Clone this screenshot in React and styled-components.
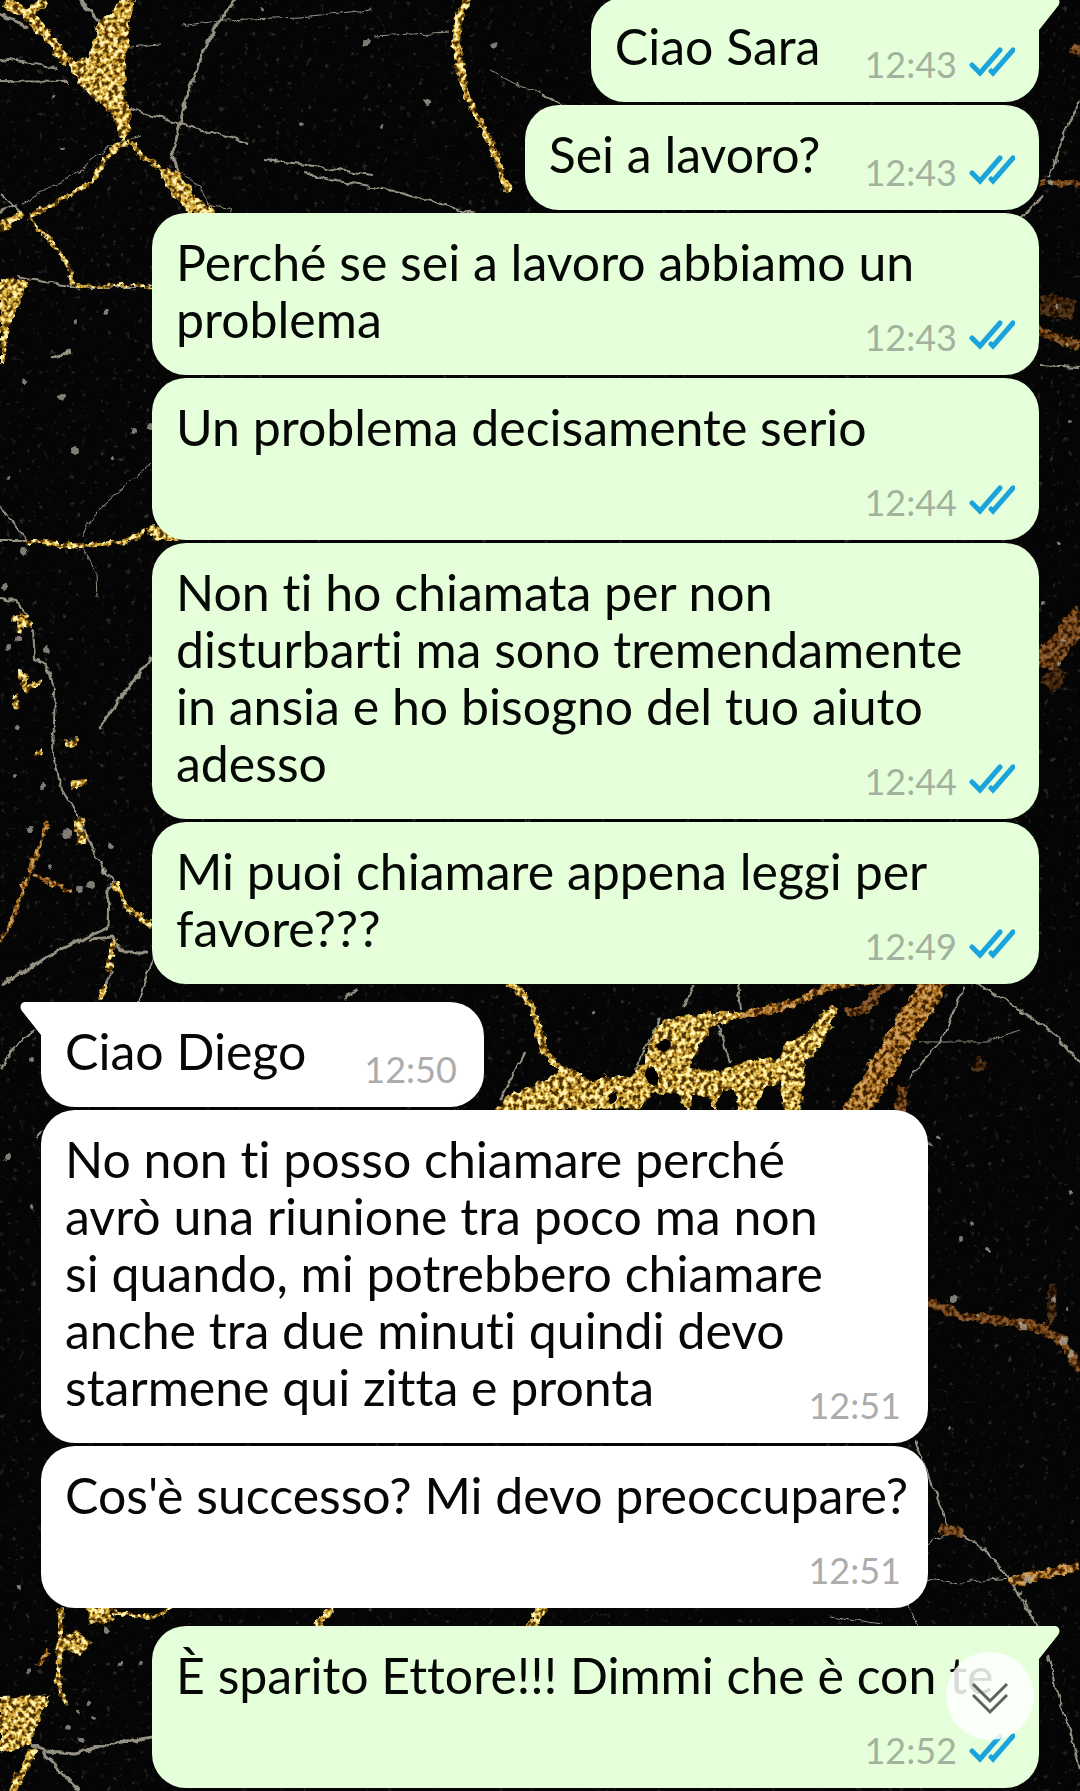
import React from 'react';
import styled, { createGlobalStyle } from 'styled-components';

const GlobalStyle = createGlobalStyle`
  body {
    margin: 0;
    background: #050505;
  }
`;

const Screen = styled.main`
  position: relative;
  min-height: 100vh;
  overflow: hidden;
  font-family: Lato, 'Noto Sans', sans-serif;
  font-variant-ligatures: none;
`;

const Wallpaper = styled.svg`
  position: absolute;
  top: 0;
  left: 0;
  width: 100%;
  height: 100%;
`;

const Thread = styled.div`
  position: relative;
  display: flex;
  flex-direction: column;
  gap: 18px;
  margin-top: -3px;
  padding: 0 41px 3px;
`;

const Group = styled.section`
  display: flex;
  flex-direction: column;
  align-items: ${props => props.$mine ? 'flex-end' : 'flex-start'};
  gap: 3px;
`;

const Bubble = styled.article`
  position: relative;
  display: flow-root;
  box-sizing: border-box;
  width: ${props => props.$wide ? '100%' : 'auto'};
  max-width: calc(100% - 111px);
  padding: 21px 10px 27px 24px;
  border-radius: 34px;
  ${props => props.$tail && (props.$mine ? 'border-top-right-radius: 0;' : 'border-top-left-radius: 0;')}
  background: ${props => props.$mine ? '#e4ffda' : '#ffffff'};
  color: #050805;
  font-size: 50px;
  line-height: 57px;
`;

const TailShape = styled.svg`
  position: absolute;
  top: 0;
  ${props => props.$mine ? 'right: -21px;' : 'left: -21px; transform: scaleX(-1);'}
  width: 22px;
  height: 34px;
  fill: ${props => props.$mine ? '#e4ffda' : '#ffffff'};
`;

const Meta = styled.span`
  float: right;
  display: flex;
  align-items: flex-end;
  gap: 12px;
  height: 57px;
  margin: 7px ${props => props.$mine ? '14px' : '17px'} -7px ${props => props.$mine ? '44px' : '58px'};
`;

const Time = styled.time`
  color: ${props => props.$mine ? '#a3b29f' : '#acacac'};
  font-size: 36px;
  line-height: 36px;
`;

const TickIcon = styled.svg`
  width: 46px;
  height: 30px;
  margin-bottom: 5px;
  fill: none;
  stroke: #1ba4dc;
  stroke-width: 5;
  stroke-linecap: round;
`;

const ScrollButton = styled.button`
  position: fixed;
  right: 46px;
  bottom: 51px;
  display: flex;
  align-items: center;
  justify-content: center;
  width: 88px;
  height: 88px;
  padding: 4px 0 0;
  border: 0;
  border-radius: 50%;
  background: rgba(255, 255, 255, 0.85);
`;

// tints laid over the glitter
const GOLD = '#fffbe6';
const AMBER = '#cda680';
const BRONZE = '#8a6248';
const UMBER = '#553c2c';
const SILVER = '#c4bfac';

const goldShapes = [
  'M121 0H136L130 20L126 70L125 100L131 115L126 142L120 135L112 115L90 95L76 80L68 60L88 57L92 45L97 25Z',
  'M157 166L178 172L195 195L218 213H190L165 186Z',
  'M0 279L28 281L12 320L3 362L0 366Z',
  'M145 527L160 526L180 541H155Z',
  'M493 1112L510 1095L545 1080L565 1068L600 1076L630 1078L645 1060L655 1030L668 1018L690 1015L740 1010L745 1018L715 1026L700 1042L689 1068L720 1070L760 1058L780 1058L785 1043L805 1035L830 1004L838 1010L825 1040L805 1062L800 1112H785L780 1084L765 1088L755 1112H740L735 1090L722 1090L715 1112L708 1095L694 1095L688 1110L676 1092L652 1094L640 1108Z',
  'M0 1698L50 1695L37 1722L30 1745L0 1755Z',
  'M86 1606H108L114 1620L90 1624Z',
  'M60 1640L75 1632L92 1644L80 1655L62 1650Z',
];

// [path, stroke width, colour]
const veins = [
  ['M5 3L28 14L48 38L68 62', 10, GOLD],
  ['M26 14L45 2', 8, GOLD],
  ['M126 140L108 155L92 182L60 200L30 216', 5, GOLD],
  ['M22 212L0 229', 8, GOLD],
  ['M129 140L140 155L160 168', 4, GOLD],
  ['M467 0L456 25L455 42L461 75L470 105L485 130L497 160L509 192', 7, GOLD],
  ['M460 12L456 40L463 80', 9, GOLD],
  ['M75 287L103 285L152 286', 3, GOLD],
  ['M30 218L50 240L65 260L75 287', 3, GOLD],
  ['M27 541L75 546L120 543L145 532', 5, GOLD],
  ['M77 818L83 845', 9, GOLD],
  ['M114 882L127 908L152 926', 5, GOLD],
  ['M48 822L30 870L10 925L0 942', 4, AMBER],
  ['M33 874L60 886L72 892', 4, AMBER],
  ['M12 617L32 625M20 632L24 614', 7, GOLD],
  ['M22 670L26 690L40 680M15 695L18 710', 5, GOLD],
  ['M65 743H79M36 752H42M72 784L87 782', 7, GOLD],
  ['M100 1000L105 985M108 972L114 940', 6, GOLD],
  ['M498 970L520 992L534 1008L543 1050L565 1072', 7, GOLD],
  ['M740 1015L790 1005L830 986L890 978', 8, AMBER],
  ['M846 1012L866 1010L874 996L894 978', 9, BRONZE],
  ['M942 970L898 1042L852 1118', 26, AMBER],
  ['M900 1112L903 1085', 10, BRONZE],
  ['M922 1295L932 1303L960 1316L1000 1320L1040 1328L1062 1340L1080 1370', 9, BRONZE],
  ['M1051 1325L1053 1284', 8, UMBER],
  ['M940 1528L962 1532', 9, BRONZE],
  ['M1010 1582L1040 1575L1080 1566', 10, AMBER],
  ['M1010 320L1035 329L1080 347', 10, BRONZE],
  ['M1040 305L1074 310', 20, UMBER],
  ['M1008 660L1050 656L1084 615', 24, BRONZE],
  ['M1046 688L1062 668', 16, UMBER],
  ['M1040 183H1080', 6, BRONZE],
  ['M1072 48L1080 52', 9, BRONZE],
  ['M61 1608L60 1650L58 1680L65 1705', 5, GOLD],
  ['M48 1650L38 1666', 4, AMBER],
  ['M34 1750L12 1791', 8, GOLD],
  ['M113 1612L150 1618L172 1608', 4, GOLD],
  ['M335 1604L316 1628', 6, GOLD],
  ['M545 1602L530 1628', 9, GOLD],
  ['M975 1062L984 1068', 14, UMBER],
];

const threads = [
  ['M80 0L100 22M0 14L28 27', 3],
  ['M0 59L30 63L57 68M0 81L68 82', 2],
  ['M235 0L217 24L200 60L187 94L180 125L172 152L178 172', 3],
  ['M180 26L225 20L300 17L370 10', 1],
  ['M130 47L160 44M375 36L450 32', 1],
  ['M130 109L180 124L248 143', 2],
  ['M265 160L300 164L372 175M305 173L335 181L400 192L475 214', 2],
  ['M140 135L112 145L75 173L22 204', 1],
  ['M180 172L202 188L208 205L230 207L232 214', 1],
  ['M490 70L520 86L545 95L565 107', 1],
  ['M0 195L22 214M0 212L16 204', 2],
  ['M16 277L75 287H152', 2],
  ['M0 505L27 540M0 541H27', 2],
  ['M152 463L100 508L87 525L82 538M84 548L96 575L97 598', 1],
  ['M52 358L70 352M152 657L115 705L100 730', 3],
  ['M0 598L15 600L28 615M33 630L35 660L46 665L55 690L53 755L62 790L80 820L97 858L115 882', 2],
  ['M0 985L60 950L107 928L108 890L114 880M90 940L112 938L124 952H148', 3],
  ['M152 958L138 1002M112 970L100 1000', 2],
  ['M36 1030L22 1038L0 1068M36 1136L42 1130', 2],
  ['M695 984L683 1008M660 1020L634 1070M738 984L741 1010M718 1025L730 1062M525 1052L500 1100', 2],
  ['M964 986L944 1035L910 1078M975 982L1005 1000L1040 1024L1060 1040L1082 1066', 2],
  ['M920 1042H990L1018 1030', 1],
  ['M914 1440L928 1475L948 1525L985 1550L1010 1580L1035 1622', 2],
  ['M926 1579L960 1583L1010 1578M928 1543L945 1535M906 1600L917 1628M830 1616L882 1624', 1],
  ['M1025 1598L1037 1628M1048 1655L1056 1690L1070 1730L1080 1770', 2],
  ['M1080 100L1065 130L1050 178M1044 195L1020 218M1040 365L1080 367', 2],
  ['M30 1745L48 1752L75 1754L115 1743L152 1737M42 1752L80 1791', 3],
  ['M345 1000L358 988M542 95L560 104', 2],
];

// x, y, radius
const dots = [
  [366, 43, 3], [426, 103, 3], [382, 128, 2], [494, 45, 3], [302, 124, 2], [262, 10, 2],
  [53, 96, 2], [61, 148, 2], [25, 381, 3], [74, 451, 4], [75, 322, 2], [112, 459, 2],
  [134, 431, 3], [150, 426, 3], [8, 478, 2], [62, 396, 3], [106, 311, 3], [24, 551, 4],
  [4, 588, 3], [8, 647, 3], [19, 638, 3], [46, 650, 3], [18, 727, 3], [42, 786, 3],
  [29, 829, 4], [67, 834, 5], [80, 889, 4], [90, 884, 4], [110, 846, 3], [105, 870, 3],
  [50, 868, 2], [14, 775, 2], [8, 1156, 3], [31, 1206, 2], [32, 1060, 2], [594, 1012, 2],
  [953, 1299, 4], [1053, 1300, 3], [1068, 1309, 2], [938, 1136, 2], [973, 1224, 2],
  [988, 1250, 2], [960, 1239, 2], [1069, 1192, 2], [1022, 1326, 4], [978, 1316, 2],
  [1064, 1341, 4], [1071, 1354, 3], [1029, 1580, 4], [1020, 1593, 2], [950, 1428, 2],
  [107, 1630, 3], [28, 1671, 2], [19, 1588, 2], [140, 1662, 2], [120, 1664, 2],
  [88, 1704, 2], [78, 1711, 2], [68, 1728, 3], [80, 1740, 3], [94, 1718, 2],
  [1070, 422, 2], [1060, 542, 2], [1044, 603, 2], [1058, 307, 2], [1067, 345, 2],
  [1032, 659, 3], [1058, 664, 2], [1062, 640, 2], [1050, 184, 3], [930, 1145, 2],
];

const Marble = () => (
  <Wallpaper viewBox="0 0 1080 1791" preserveAspectRatio="xMidYMin slice" aria-hidden="true">
    <defs>
      <filter id="glitter" filterUnits="userSpaceOnUse" x="0" y="0" width="1080" height="1791" colorInterpolationFilters="sRGB">
        <feTurbulence type="fractalNoise" baseFrequency="0.12" numOctaves="3" seed="4" result="warp" />
        <feDisplacementMap in="SourceGraphic" in2="warp" scale="9" xChannelSelector="R" yChannelSelector="G" result="rough" />
        <feTurbulence type="fractalNoise" baseFrequency="0.22" numOctaves="2" seed="9" />
        <feColorMatrix values="3.6 0 0 0 -1.3  3.6 0 0 0 -1.3  3.6 0 0 0 -1.3  0 0 0 0 1" />
        <feComponentTransfer result="grain">
          <feFuncR type="table" tableValues="0.3 0.62 0.8 0.9 1" />
          <feFuncG type="table" tableValues="0.2 0.45 0.64 0.8 0.97" />
          <feFuncB type="table" tableValues="0.04 0.12 0.24 0.4 0.78" />
        </feComponentTransfer>
        <feComposite in="rough" in2="grain" operator="arithmetic" k1="1" k2="0" k3="0" k4="0" />
      </filter>
      <filter id="crack" filterUnits="userSpaceOnUse" x="0" y="0" width="1080" height="1791">
        <feTurbulence type="fractalNoise" baseFrequency="0.09" numOctaves="3" seed="7" />
        <feDisplacementMap in="SourceGraphic" scale="7" xChannelSelector="R" yChannelSelector="G" />
      </filter>
      <filter id="dust" filterUnits="userSpaceOnUse" x="0" y="0" width="1080" height="1791" colorInterpolationFilters="sRGB">
        <feTurbulence type="fractalNoise" baseFrequency="0.16" numOctaves="3" seed="12" />
        <feColorMatrix values="0 0 0 0 0.5  0 0 0 0 0.5  0 0 0 0 0.48  4 0 0 0 -2.65" />
      </filter>
    </defs>
    <rect width="1080" height="1791" fill="#050505" />
    <rect width="1080" height="1791" filter="url(#dust)" opacity="0.4" />
    <g fill="none" stroke={SILVER} strokeLinejoin="round" opacity="0.75" filter="url(#crack)">
      {threads.map(([d, width]) => <path key={d} d={d} strokeWidth={width} />)}
    </g>
    <g filter="url(#glitter)">
      {goldShapes.map(d => <path key={d} d={d} fill={GOLD} />)}
      {veins.map(([d, width, color]) => (
        <path key={d} d={d} fill="none" stroke={color} strokeWidth={width} strokeLinejoin="round" />
      ))}
    </g>
    <g fill="#050505" filter="url(#crack)">
      <ellipse cx="664" cy="1046" rx="8" ry="6" />
      <ellipse cx="652" cy="1077" rx="7" ry="9" />
      <ellipse cx="593" cy="1076" rx="12" ry="4" />
      <ellipse cx="612" cy="1098" rx="4" ry="6" />
    </g>
    <g fill="#b5b0a4" opacity="0.7" filter="url(#crack)">
      {dots.map(([x, y, r]) => <circle key={`${x}-${y}`} cx={x} cy={y} r={r} />)}
    </g>
  </Wallpaper>
);

const Tail = ({ mine }) => (
  <TailShape $mine={mine} viewBox="0 0 22 34" aria-hidden="true">
    <path d="M0 0H17C21 0 23 5 20 9L1 33V34H0Z" />
  </TailShape>
);

const Ticks = () => (
  <TickIcon viewBox="0 0 46 30" role="img" aria-label="Letto">
    <path d="M3 18L11 26L31 3M22 24L24 26L44 3" />
  </TickIcon>
);

const Message = ({ mine, tail, lines, time }) => (
  <Bubble $mine={mine} $tail={tail} $wide={lines.length > 1}>
    {tail && <Tail mine={mine} />}
    {lines.map((line, i) => (
      <React.Fragment key={i}>
        {i > 0 && <br />}
        <span>{line}</span>
      </React.Fragment>
    ))}
    <Meta $mine={mine}>
      <Time $mine={mine}>{time}</Time>
      {mine && <Ticks />}
    </Meta>
  </Bubble>
);

const groups = [
  {
    mine: true,
    messages: [
      { lines: ['Ciao Sara'], time: '12:43' },
      { lines: ['Sei a lavoro?'], time: '12:43' },
      { lines: ['Perché se sei a lavoro abbiamo un', 'problema'], time: '12:43' },
      { lines: ['Un problema decisamente serio'], time: '12:44' },
      {
        lines: [
          'Non ti ho chiamata per non',
          'disturbarti ma sono tremendamente',
          'in ansia e ho bisogno del tuo aiuto',
          'adesso',
        ],
        time: '12:44',
      },
      { lines: ['Mi puoi chiamare appena leggi per', 'favore???'], time: '12:49' },
    ],
  },
  {
    mine: false,
    messages: [
      { lines: ['Ciao Diego'], time: '12:50' },
      {
        lines: [
          'No non ti posso chiamare perché',
          'avrò una riunione tra poco ma non',
          'si quando, mi potrebbero chiamare',
          'anche tra due minuti quindi devo',
          'starmene qui zitta e pronta',
        ],
        time: '12:51',
      },
      { lines: ["Cos'è successo? Mi devo preoccupare?"], time: '12:51' },
    ],
  },
  {
    mine: true,
    messages: [
      { lines: ['È sparito Ettore!!! Dimmi che è con te'], time: '12:52' },
    ],
  },
];

const App = () => (
  <Screen>
    <GlobalStyle />
    <Marble />
    <Thread>
      {groups.map((group, i) => (
        <Group $mine={group.mine} key={i}>
          {group.messages.map((message, j) => (
            <Message {...message} mine={group.mine} tail={j === 0} key={j} />
          ))}
        </Group>
      ))}
    </Thread>
    <ScrollButton type="button" aria-label="Vai in fondo">
      <svg width="40" height="34" viewBox="0 0 40 34" fill="none" stroke="#5f6360" strokeWidth="3">
        <path d="M3 3L20 20L37 3M3 14L20 31L37 14" />
      </svg>
    </ScrollButton>
  </Screen>
);

export default App;
